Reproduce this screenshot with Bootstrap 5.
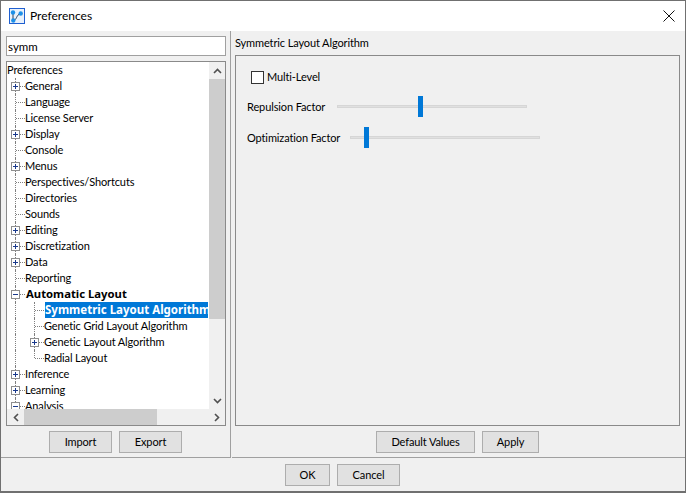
<!DOCTYPE html>
<html lang="en">
<head>
<meta charset="utf-8">
<title>Preferences</title>
<link rel="stylesheet" href="https://cdn.jsdelivr.net/npm/bootstrap@5.3.0/dist/css/bootstrap.min.css">
<style>
html,body{margin:0;height:100%;background:#f0f0f0}
body{font-family:Lato,"Liberation Sans",sans-serif;font-size:11px;letter-spacing:-.12px;color:#000;line-height:16px;overflow:hidden}
.dlg{width:686px;height:493px;border:1px solid #707070;border-bottom-width:2px;background:#f0f0f0}
.ttl{height:30px;background:#fff;font-size:12px;letter-spacing:0;padding-left:8px;gap:5px}
.ttl-x{width:12px;height:12px;margin-right:10px}
.main{height:427px}
.lft{width:230px;padding:5px 5px 0 5px;border-right:1px solid #a0a0a0;border-bottom:1px solid #a0a0a0}
.rgt{width:0;padding:4px 5px 0 3px;margin-left:1px;border-bottom:1px solid #a0a0a0}
.srch.form-control{height:20px;width:220px;border:1px solid #a0a0a0;border-radius:0;font-size:11.5px;padding:0 1px;line-height:16px;box-shadow:none;color:#000}
.tbox{margin-top:5px;height:365px;width:220px;border:1px solid #8a8a8a;background:#fff}
.tview{height:347px;overflow:hidden}
.tscroll{width:201px;margin-right:1px;overflow:hidden}
.trow{height:16px;white-space:nowrap}
.tc{width:19px;height:16px;flex:none;position:relative}
.tc.vl::before,.tc.tee::before,.tc.end::before{content:"";position:absolute;left:8px;top:0;bottom:0;border-left:1px dotted #808080}
.tc.end::before{bottom:8px}
.tc.tee::after,.tc.end::after{content:"";position:absolute;left:9px;width:9px;top:8px;border-top:1px dotted #808080}
.xp{position:absolute;left:4px;top:4px;width:9px;height:9px;border:1px solid #8f8f8f;background:#fff;z-index:1}
.xp::before{content:"";position:absolute;left:1px;right:1px;top:3px;height:1px;background:#1a3a8c}
.xp.pl::after{content:"";position:absolute;top:1px;bottom:1px;left:3px;width:1px;background:#1a3a8c}
.lbl{margin-left:-1px}
.lbl.sel{font-family:"Noto Sans",sans-serif;font-size:11.5px;letter-spacing:0;background:#0078d7;color:#fff;font-weight:700;margin-left:0}
.lbl.strong{font-family:"Noto Sans",sans-serif;font-weight:700;margin-left:0;font-size:11.300px;letter-spacing:0}
.vbar{width:16px;height:347px;background:#f0f0f0;flex:none}
.vthumb{height:240px;width:16px;background:#cdcdcd}
.arr{height:17px;width:16px}
.hbar{height:16px;background:#f0f0f0;width:218px}
.harr{width:17px;height:16px;flex:none}
.hthumb{width:133px;height:16px;background:#cdcdcd}
.dbtn.btn{height:22px;border:1px solid #adadad;border-radius:0;background:#e1e1e1;font-size:11px;letter-spacing:-.12px;line-height:16px;padding:0;color:#000}
.btn-row{gap:7px;margin-top:5px}
.w-imp{width:63px}.w-ok{width:45px}.w-can{width:63px}.w-def{width:99px}.w-app{width:57px}
.rhead{height:16px;margin-bottom:4px}
.gbox{height:371px;width:445px;border:1px solid #8a8a8a;padding:13px 10px 0 11px}
.cbx{width:13px;height:13px;border:1px solid #333;background:#fff;margin-left:4px;margin-right:3px;flex:none}
.sl-row{height:21px}
.sl-first{margin-top:11px}
.sl-next{margin-top:10px}
.sl-a{width:90px;flex:none}
.sl-b{width:103px;flex:none}
.strack{width:190px;height:3px;background:#e0e0e0;border:1px solid #d6d6d6;position:relative}
.sthumb{position:absolute;top:-10px;width:5px;height:21px;background:#0078d7}
.t1{left:80px}.t2{left:13px}
.foot{height:33px;padding-top:6px;gap:7px;padding-left:284px}
.r-btns{padding-left:141px;margin-top:5px}
</style>
</head>
<body>
<div class="dlg d-flex flex-column">
  <div class="ttl d-flex align-items-center">
    <svg width="16" height="16" viewBox="0 0 16 16" class="flex-shrink-0"><rect x=".5" y=".5" width="15" height="15" fill="#e9f1fb" stroke="#1f5fd0"/><path d="M4 4.500V12.500M4.500 12.500C8 12 7 7 11.500 5.500" stroke="#2a3f5c" fill="none"/><circle cx="4" cy="4.500" r="2.200" fill="#1e90e8"/><circle cx="11.700" cy="5.500" r="2.200" fill="#1e90e8"/><circle cx="4.300" cy="12.500" r="2.200" fill="#1e90e8"/></svg>
    <span class="flex-grow-1">Preferences</span>
    <svg class="ttl-x" viewBox="0 0 12 12"><path d="M.5 .5L11.500 11.500M11.500 .5L.5 11.500" stroke="#111" fill="none"/></svg>
  </div>
  <div class="main d-flex">
    <div class="lft flex-shrink-0">
      <input class="srch form-control" value="symm">
      <div class="tbox">
        <div class="d-flex tview">
          <div class="tscroll">
            <div class="trow">Preferences</div>
            <div class="trow d-flex"><div class="tc tee"><i class="xp pl"></i></div><span class="lbl">General</span></div>
            <div class="trow d-flex"><div class="tc tee"></div><span class="lbl">Language</span></div>
            <div class="trow d-flex"><div class="tc tee"></div><span class="lbl">License Server</span></div>
            <div class="trow d-flex"><div class="tc tee"><i class="xp pl"></i></div><span class="lbl">Display</span></div>
            <div class="trow d-flex"><div class="tc tee"></div><span class="lbl">Console</span></div>
            <div class="trow d-flex"><div class="tc tee"><i class="xp pl"></i></div><span class="lbl">Menus</span></div>
            <div class="trow d-flex"><div class="tc tee"></div><span class="lbl">Perspectives/Shortcuts</span></div>
            <div class="trow d-flex"><div class="tc tee"></div><span class="lbl">Directories</span></div>
            <div class="trow d-flex"><div class="tc tee"></div><span class="lbl">Sounds</span></div>
            <div class="trow d-flex"><div class="tc tee"><i class="xp pl"></i></div><span class="lbl">Editing</span></div>
            <div class="trow d-flex"><div class="tc tee"><i class="xp pl"></i></div><span class="lbl">Discretization</span></div>
            <div class="trow d-flex"><div class="tc tee"><i class="xp pl"></i></div><span class="lbl">Data</span></div>
            <div class="trow d-flex"><div class="tc tee"></div><span class="lbl">Reporting</span></div>
            <div class="trow d-flex"><div class="tc tee"><i class="xp"></i></div><span class="lbl strong">Automatic Layout</span></div>
            <div class="trow d-flex"><div class="tc vl"></div><div class="tc tee"></div><span class="lbl sel">Symmetric Layout Algorithm</span></div>
            <div class="trow d-flex"><div class="tc vl"></div><div class="tc tee"></div><span class="lbl">Genetic Grid Layout Algorithm</span></div>
            <div class="trow d-flex"><div class="tc vl"></div><div class="tc tee"><i class="xp pl"></i></div><span class="lbl">Genetic Layout Algorithm</span></div>
            <div class="trow d-flex"><div class="tc vl"></div><div class="tc end"></div><span class="lbl">Radial Layout</span></div>
            <div class="trow d-flex"><div class="tc tee"><i class="xp pl"></i></div><span class="lbl">Inference</span></div>
            <div class="trow d-flex"><div class="tc tee"><i class="xp pl"></i></div><span class="lbl">Learning</span></div>
            <div class="trow d-flex"><div class="tc tee"><i class="xp"></i></div><span class="lbl">Analysis</span></div>
          </div>
          <div class="vbar d-flex flex-column">
            <div class="arr d-flex align-items-center justify-content-center"><svg width="9" height="6" viewBox="0 0 9 6"><path d="M1 5L4.500 1.500L8 5" stroke="#505050" stroke-width="1.600" fill="none"/></svg></div>
            <div class="vthumb"></div>
            <div class="flex-grow-1"></div>
            <div class="arr d-flex align-items-center justify-content-center"><svg width="9" height="6" viewBox="0 0 9 6"><path d="M1 1L4.500 4.500L8 1" stroke="#505050" stroke-width="1.600" fill="none"/></svg></div>
          </div>
        </div>
        <div class="hbar d-flex">
          <div class="harr d-flex align-items-center justify-content-center"><svg width="6" height="9" viewBox="0 0 6 9"><path d="M5 1L1.500 4.500L5 8" stroke="#505050" stroke-width="1.600" fill="none"/></svg></div>
          <div class="hthumb"></div>
          <div class="flex-grow-1"></div>
          <div class="harr d-flex align-items-center justify-content-center"><svg width="6" height="9" viewBox="0 0 6 9"><path d="M1 1L4.500 4.500L1 8" stroke="#505050" stroke-width="1.600" fill="none"/></svg></div>
        </div>
      </div>
      <div class="d-flex justify-content-center btn-row">
        <button class="btn dbtn w-imp">Import</button>
        <button class="btn dbtn w-imp">Export</button>
      </div>
    </div>
    <div class="rgt flex-grow-1">
      <div class="rhead">Symmetric Layout Algorithm</div>
      <div class="gbox">
        <div class="d-flex align-items-center trow"><span class="cbx"></span><span>Multi-Level</span></div>
        <div class="d-flex align-items-center sl-row sl-first"><span class="sl-a">Repulsion Factor</span><div class="strack"><div class="sthumb t1"></div></div></div>
        <div class="d-flex align-items-center sl-row sl-next"><span class="sl-b">Optimization Factor</span><div class="strack"><div class="sthumb t2"></div></div></div>
      </div>
      <div class="d-flex btn-row r-btns">
        <button class="btn dbtn w-def">Default Values</button>
        <button class="btn dbtn w-app">Apply</button>
      </div>
    </div>
  </div>
  <div class="foot d-flex">
    <button class="btn dbtn w-ok">OK</button>
    <button class="btn dbtn w-can">Cancel</button>
  </div>
</div>
</body>
</html>
